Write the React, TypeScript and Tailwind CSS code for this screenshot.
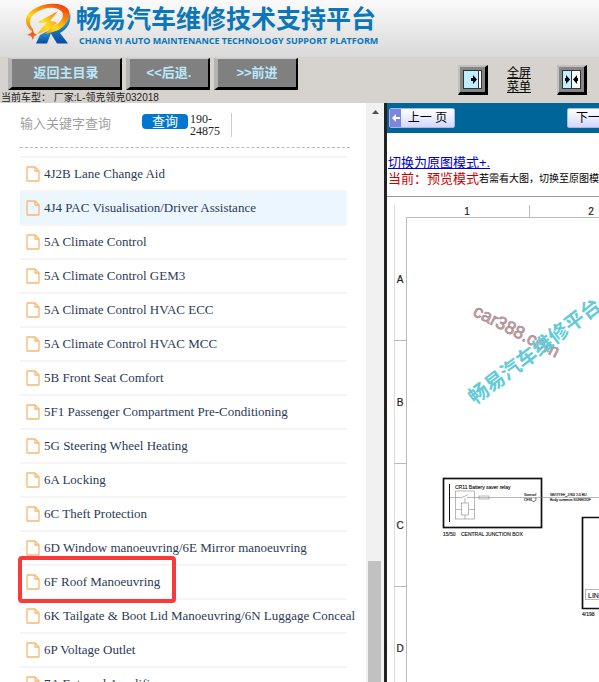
import { useState } from "react";

const items = [
  "4J2B Lane Change Aid",
  "4J4 PAC Visualisation/Driver Assistance",
  "5A Climate Control",
  "5A Climate Control GEM3",
  "5A Climate Control HVAC ECC",
  "5A Climate Control HVAC MCC",
  "5B Front Seat Comfort",
  "5F1 Passenger Compartment Pre-Conditioning",
  "5G Steering Wheel Heating",
  "6A Locking",
  "6C Theft Protection",
  "6D Window manoeuvring/6E Mirror manoeuvring",
  "6F Roof Manoeuvring",
  "6K Tailgate & Boot Lid Manoeuvring/6N Luggage Conceal",
  "6P Voltage Outlet",
  "7A External Amplifier",
];

const Logo = () => (
  <svg width="48" height="44" viewBox="0 0 48 44" aria-hidden="true">
    <defs>
      <linearGradient id="ring" x1="0.8" y1="0" x2="0.1" y2="1">
        <stop offset="0" stopColor="#ee3c10" />
        <stop offset="0.3" stopColor="#fb8a08" />
        <stop offset="0.6" stopColor="#ffdc18" />
        <stop offset="1" stopColor="#ef5a10" />
      </linearGradient>
      <linearGradient id="bolt" x1="1" y1="0" x2="0" y2="1">
        <stop offset="0" stopColor="#f87a10" />
        <stop offset="0.6" stopColor="#ffe020" />
        <stop offset="1" stopColor="#fdb010" />
      </linearGradient>
      <linearGradient id="leg" x1="0" y1="0" x2="0" y2="1">
        <stop offset="0" stopColor="#30b0e8" />
        <stop offset="1" stopColor="#0a48a0" />
      </linearGradient>
    </defs>
    <path d="M11 40.500L15 32L28 25L22 40.500Z" fill="url(#leg)" />
    <path d="M25 29C35 28 43 21 45 9C47 18 43 26 35 30L43 40.500H32Z" fill="url(#leg)" />
    <path d="M8 29C-2 22 -1 12 9 6C20 -1 37 -1 43 6C48 14 40 26 28 29L20 31L26 24C35 21 40 14 37 9C32 3 20 4 12 9C4 14 3 21 8 26Z" fill="url(#ring)" />
    <path d="M33 8L13 19Q16 21 22 19L12 31Q20 30 32 20Q30 18 25 18Z" fill="url(#bolt)" />
    <path d="M8 27L9 30L12 32L9 33L8 37L6 33L2 32L6 30Z" fill="#f0601c" />
  </svg>
);

const FileIcon = () => (
  <svg width="14" height="16" viewBox="0 0 14 16" fill="none" stroke="#f8b870" strokeWidth="1.3" strokeLinejoin="round" className="shrink-0" aria-hidden="true">
    <path d="M1.500 1H9L13 5V14.500Q13 15 12.500 15H1.500Q1 15 1 14.500V1.500Q1 1 1.500 1Z" />
    <path d="M9 1V5H13" />
  </svg>
);

const bevel = "border-l-4 border-t border-r-2 border-b-3 border-l-[#b4b4b4] border-t-[#d0d0d0] border-r-black border-b-black bg-[#808080] text-[13px] font-bold text-[#b9e8fb] h-8 cursor-pointer";
const iconButton = "grid h-[30px] w-[30px] cursor-pointer place-items-center border-2 border-r-3 border-b-3 border-t-[#c0c0c0] border-r-black border-b-black border-l-[#c0c0c0] bg-[#868686]";
const pager = "h-5 w-[66px] shrink-0 cursor-pointer rounded-xs border border-[#aab4f0] bg-linear-to-b from-white to-[#d4d8fa] text-xs text-black";

const Toolbar = () => (
  <div className="flex h-[46px] shrink-0 items-start justify-between overflow-hidden bg-[#d6d3ce] pr-3">
    <div className="flex flex-col">
      <div className="flex gap-1 pt-px pl-2">
        <button className={`${bevel} w-[114px]`}>返回主目录</button>
        <button className={`${bevel} w-[84px]`}>&lt;&lt;后退.</button>
        <button className={`${bevel} w-[84px]`}>&gt;&gt;前进</button>
      </div>
      <p className="pt-[2px] pl-px text-[10px] leading-3 whitespace-pre text-[#222]">当前车型： 厂家:L-领克领克032018</p>
    </div>
    <div className="flex items-center pt-2">
      <button aria-label="展开" className={iconButton}>
        <svg width="19" height="19" viewBox="0 0 19 19">
          <path d="M0 0H19V19H0Z" fill="#333" />
          <path d="M1 1H15V18H1Z" fill="#bdefff" />
          <path d="M15 1H18V18H15Z" fill="#fff" />
          <path d="M15.500 1V18" stroke="#333" />
          <path d="M8 8H10V5L14 9.500L10 14V11H8Z" fill="#000" />
        </svg>
      </button>
      <a href="#full" className="ml-[19px] w-6 text-xs leading-[14px] text-black underline">全屏菜单</a>
      <button aria-label="分栏" className={`${iconButton} ml-[26px]`}>
        <svg width="19" height="19" viewBox="0 0 19 19">
          <path d="M0 0H19V19H0Z" fill="#333" />
          <path d="M1 1H9V18H1Z" fill="#bdefff" />
          <path d="M10 1H18V18H10Z" fill="#fff" />
          <path d="M3 8H4V5L8 9.500L4 14V11H3Z" fill="#000" />
          <path d="M16 8H15V5L11 9.500L15 14V11H16Z" fill="#000" />
        </svg>
      </button>
    </div>
  </div>
);

const Sidebar = () => {
  const [selected, setSelected] = useState(1);
  const [keyword, setKeyword] = useState("");

  return (
    <aside className="flex w-[384px] shrink-0 bg-white">
      <div className="min-w-0 flex-1 overflow-hidden pl-5">
        <form className="mr-4 flex h-[45px] items-start border-b border-dashed border-[#bbb] pt-2" onSubmit={(e) => e.preventDefault()}>
          <input
            aria-label="关键字"
            placeholder="输入关键字查询"
            value={keyword}
            onChange={(e) => setKeyword(e.target.value)}
            className="h-6 w-[122px] text-[13px] outline-none placeholder:text-[#a0a0a0]"
          />
          <button className="mt-[3px] h-[15px] w-[46px] cursor-pointer rounded-sm bg-[#0078d0] text-[13px] leading-[15px] text-white">查询</button>
          <p className="mt-[2px] ml-[2px] h-6 w-[42px] border-r border-[#ccc] font-['Liberation_Serif',serif] text-xs leading-3 text-[#222]">
            190-<br />24875
          </p>
        </form>
        <ul className="mt-2 w-[327px] border-t-2 border-[#f5f5f5] font-['Liberation_Serif',serif]">
          {items.map((item, i) => (
            <li key={item} className={`relative h-[34px] border-b-2 border-[#f5f5f5] ${selected === i ? "bg-[#ebf6fe]" : ""}`}>
              <button onClick={() => setSelected(i)} className="flex h-8 cursor-pointer items-center gap-1 pl-[6px] text-[13px] whitespace-nowrap text-[#2b3a55]">
                <FileIcon />
                {item}
              </button>
              {item.startsWith("6F") && <span className="pointer-events-none absolute -top-[10px] -left-[2px] h-[47px] w-[158px] rounded-sm border-4 border-[#f93a3a]" />}
            </li>
          ))}
        </ul>
      </div>
      <div className="flex w-[18px] flex-col items-center justify-between bg-[#f1f1f1]">
        <svg width="7" height="4" viewBox="0 0 7 4" className="mt-[7px]"><path d="M0 4L3.500 0L7 4Z" fill="#505050" /></svg>
        <div className="mr-px h-[121px] w-[13px] bg-[#c1c1c1]" />
      </div>
    </aside>
  );
};

const Diagram = () => (
  <svg width="212" height="485" viewBox="387 197 212 485" className="block shrink-0" fontFamily="Liberation Sans, Noto Sans CJK SC, sans-serif" fill="#222">
    <g fill="none" stroke="#bbb" strokeWidth="1">
      <path d="M394.500 205V682" stroke="#ddd" />
      <path d="M406.500 682V217.500H599M529.500 205V217M394 340.500H406M394 463.500H406M394 586.500H406" />
    </g>
    <g fontSize="10" textAnchor="middle" stroke="#222" strokeWidth="0.2">
      <text x="467" y="215">1</text>
      <text x="591" y="215">2</text>
      <text x="400" y="283">A</text>
      <text x="400" y="406">B</text>
      <text x="400" y="529">C</text>
      <text x="400" y="652">D</text>
    </g>
    <text transform="translate(472 315) rotate(27)" fontSize="18" fill="#cfa58c" stroke="#a78b9c" strokeWidth="0.7">car388.com</text>
    <text transform="translate(475 405) rotate(-37)" fontSize="20" fontWeight="bold" fill="#62cbd8">畅易汽车维修平台</text>
    <g fill="none" stroke="#111" strokeWidth="1.700">
      <rect x="443.500" y="478.500" width="98" height="49" />
      <path d="M449.500 484V522" strokeWidth="1" />
      <path d="M600 517.500H582.500V608.500H600" />
    </g>
    <g fill="none" stroke="#888" strokeWidth="0.600">
      <rect x="455.500" y="491" width="19" height="28" />
      <rect x="461.500" y="503" width="7" height="12" />
      <path d="M450 497.500H462L468 494.500M467 497.500H599M465 498V503M456 509.500H461M469 509.500H475M465 515V519" />
      <rect x="479" y="496" width="10" height="3" />
      <rect x="585.500" y="589.500" width="20" height="10" />
    </g>
    <g fontSize="5" stroke="#222" strokeWidth="0.15">
      <text x="455" y="489">CR11 Battery saver relay</text>
      <text x="443" y="535.500">15/50</text>
      <text x="461" y="535.500">CENTRAL JUNCTION BOX</text>
      <text x="582" y="615.500">4/198</text>
      <text x="588" y="598" fontSize="7">LIN</text>
      <g fontSize="3.500">
        <text x="524" y="496">Sunroof</text>
        <text x="524" y="501">CF81_2</text>
        <text x="550" y="496">SB/7/TEE_J760 2.0 BU</text>
        <text x="550" y="500.500">Body common  SUNROOF</text>
      </g>
    </g>
  </svg>
);

const App = () => (
  <div className="flex h-screen flex-col overflow-hidden bg-white font-['Liberation_Sans','Noto_Sans_CJK_SC',sans-serif]">
    <header className="flex h-[57px] shrink-0 items-start gap-[3px] bg-linear-to-b from-[#fafafa] to-[#d9d9d9] pt-[3px] pl-[25px]">
      <Logo />
      <div className="text-[#0b76b8]">
        <h1 className="text-[25px] leading-8 font-bold whitespace-nowrap">畅易汽车维修技术支持平台</h1>
        <p className="pl-[3px] font-['Open_Sans',sans-serif] text-[9px] leading-3 font-bold whitespace-nowrap">CHANG YI AUTO MAINTENANCE TECHNOLOGY SUPPORT PLATFORM</p>
      </div>
    </header>
    <Toolbar />
    <div className="flex min-h-0 flex-1">
      <Sidebar />
      <main className="min-w-0 flex-1 overflow-hidden border-l-3 border-[#222]">
        <nav className="flex h-[30px] items-center justify-between bg-[#006699] pl-[2px]">
          <button className={`${pager} flex items-center`}>
            <span className="grid h-full w-[11px] place-items-center bg-[#7c86dc]">
              <svg width="8" height="8" viewBox="0 0 8 8"><path d="M0 4L4 0V3H8V5H4V8Z" fill="#fff" /></svg>
            </span>
            <span className="flex-1">上一 页</span>
          </button>
          <button className={`${pager} -mr-[34px] pl-2 text-left`}>下一 页</button>
        </nav>
        <div className="border-b border-[#999] pt-[22px] pb-[9px] pl-px text-[13px] leading-4 whitespace-nowrap">
          <a href="#origin" className="block text-[#0000cc] underline">切换为原图模式+.</a>
          <p className="flex text-[#cc0000]">
            当前：预览模式<span className="text-[10px] text-black">若需看大图，切换至原图模式</span>
          </p>
        </div>
        <Diagram />
      </main>
    </div>
  </div>
);

export default App;
